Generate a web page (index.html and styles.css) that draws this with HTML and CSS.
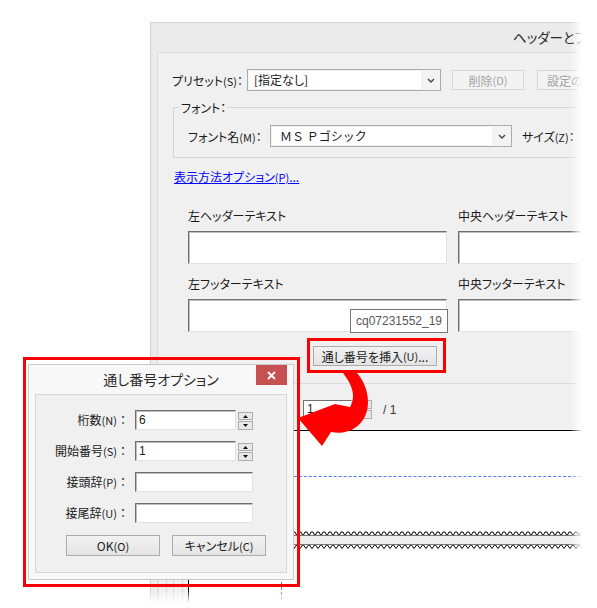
FILE: index.html
```html
<!DOCTYPE html>
<html lang="ja">
<head>
<meta charset="utf-8">
<title>通し番号オプション</title>
<link rel="stylesheet" href="styles.css">
</head>
<body>
<div class="main">
  <div class="titlebar">ヘッダーとフッター</div>
  <div class="client">
    <div class="preset-row">
      <span class="preset-lbl">プリセット<span class="acc">(S)</span>：</span>
      <div class="combo preset-combo">
        <span class="combo-text">[指定なし]</span>
        <span class="combo-arrow"><svg width="8" height="5" viewBox="0 0 8 5"><path d="M1 1 L4 4 L7 1" fill="none" stroke="#444" stroke-width="1.4"/></svg></span>
      </div>
      <div class="btn disabled del-btn">削除<span class="acc">(D)</span></div>
      <div class="btn disabled set-btn">設定の保存<span class="acc">(A)</span>...</div>
    </div>
    <div class="group">
      <span class="group-label">フォント：</span>
      <div class="font-row">
        <span class="font-lbl">フォント名<span class="acc">(M)</span>：</span>
        <div class="combo font-combo">
          <span class="combo-text font-name">ＭＳ Ｐゴシック</span>
          <span class="combo-arrow"><svg width="8" height="5" viewBox="0 0 8 5"><path d="M1 1 L4 4 L7 1" fill="none" stroke="#444" stroke-width="1.4"/></svg></span>
        </div>
        <span class="size-lbl">サイズ<span class="acc">(Z)</span>：</span>
      </div>
    </div>
    <a class="link">表示方法オプション<span class="acc">(P)</span>...</a>
    <div class="text-grid">
      <div class="field"><div class="field-lbl">左ヘッダーテキスト</div><div class="tbox"></div></div>
      <div class="field"><div class="field-lbl">中央ヘッダーテキスト</div><div class="tbox"></div></div>
      <div class="field"><div class="field-lbl">左フッターテキスト</div><div class="tbox"></div></div>
      <div class="field"><div class="field-lbl">中央フッターテキスト</div><div class="tbox"></div></div>
    </div>
    <div class="insert-row">
      <div class="hilite"><div class="btn insert-btn">通し番号を挿入<span class="acc">(U)</span>...</div></div>
    </div>
    <div class="tooltip">cq07231552_19</div>
    <div class="sep"></div>
    <div class="page-row">
      <div class="num-input">1</div>
      <div class="spin"><span></span><span></span></div>
      <span class="of">/ 1</span>
    </div>
    <div class="preview-row">
      <div class="ruler"></div>
      <div class="preview">
        <div class="hguide"></div>
        <svg class="zigzag" height="18">
          <defs>
            <pattern id="zz" width="6" height="18" patternUnits="userSpaceOnUse">
              <path d="M0.5 4 L2 1 L4 1 L5.5 4" fill="#fff" stroke="#000" stroke-width="1"/>
              <path d="M0.5 14 L3 17.5 L5.5 14" fill="#fff" stroke="#000" stroke-width="1"/>
            </pattern>
          </defs>
          <rect x="0" y="4" width="100%" height="10" fill="#efefef"/>
          <line x1="0" y1="4" x2="100%" y2="4" stroke="#000" stroke-width="1"/>
          <line x1="0" y1="14" x2="100%" y2="14" stroke="#000" stroke-width="1"/>
          <rect x="0" y="0" width="100%" height="18" fill="url(#zz)"/>
        </svg>
        <div class="vguide"></div>
      </div>
    </div>
  </div>
</div>

<div class="dlg-wrap">
  <div class="dialog">
    <div class="dlg-title">
      <span class="dlg-title-text">通し番号オプション</span>
      <span class="close"><svg width="9" height="9" viewBox="0 0 9 9"><path d="M1 1 L8 8 M8 1 L1 8" stroke="#fff" stroke-width="1.8"/></svg></span>
    </div>
    <div class="panel">
      <div class="opt-grid">
        <span class="opt-lbl">桁数<span class="acc">(N)</span>：</span>
        <div class="opt-field">
          <div class="opt-input">6</div>
          <div class="spin2">
            <span class="up"><svg width="5" height="3" viewBox="0 0 5 3"><path d="M0 3 L2.5 0 L5 3Z" fill="#111"/></svg></span>
            <span class="down"><svg width="5" height="3" viewBox="0 0 5 3"><path d="M0 0 L2.5 3 L5 0Z" fill="#111"/></svg></span>
          </div>
        </div>
        <span class="opt-lbl">開始番号<span class="acc">(S)</span>：</span>
        <div class="opt-field">
          <div class="opt-input">1</div>
          <div class="spin2">
            <span class="up"><svg width="5" height="3" viewBox="0 0 5 3"><path d="M0 3 L2.5 0 L5 3Z" fill="#111"/></svg></span>
            <span class="down"><svg width="5" height="3" viewBox="0 0 5 3"><path d="M0 0 L2.5 3 L5 0Z" fill="#111"/></svg></span>
          </div>
        </div>
        <span class="opt-lbl">接頭辞<span class="acc">(P)</span>：</span>
        <div class="opt-field"><div class="opt-input wide"></div></div>
        <span class="opt-lbl">接尾辞<span class="acc">(U)</span>：</span>
        <div class="opt-field"><div class="opt-input wide"></div></div>
      </div>
      <div class="opt-btns">
        <div class="btn dbtn">OK<span class="acc">(O)</span></div>
        <div class="btn dbtn">キャンセル<span class="acc">(C)</span></div>
      </div>
    </div>
  </div>
</div>

<svg class="arrow" width="90" height="90" viewBox="290 365 90 90">
  <path d="M343 373 C351 383 357 396 350 407 L335 404 L298 418 L322 446 L331 432 C350 436 368 424 368 402 C368 390 363 380 357 373 Z" fill="#f00"/>
</svg>

<div class="fade-r"></div>
<div class="fade-b"></div>
</body>
</html>
```

FILE: styles.css
```css
html, body {
  margin: 0;
  padding: 0;
  width: 597px;
  height: 608px;
  overflow: hidden;
  background: #fff;
}

body {
  position: relative;
  font-family: "Noto Sans CJK JP", "Noto Sans", sans-serif;
  font-size: 12px;
  font-feature-settings: "palt";
  color: #1a1a1a;
}

.acc {
  font-size: 11px;
}

/* ---------- main window ---------- */
.main {
  position: absolute;
  left: 150px;
  top: 22px;
  width: 480px;
  height: 600px;
  border-top: 1px solid #d2d2d2;
  border-left: 1px solid #d2d2d2;
  background: #ebebeb;
}

.titlebar {
  height: 29px;
  line-height: 29px;
  padding-left: 362px;
  font-size: 13.5px;
  color: #2b2b2b;
  white-space: nowrap;
}

.client {
  position: relative;
  margin-left: 6px;
  height: 570px;
  border-top: 1px solid #dcdcdc;
  border-left: 1px solid #dcdcdc;
  background: #f0f0f0;
}

.preset-row {
  display: flex;
  align-items: center;
  height: 22px;
  margin: 16px 0 0 14px;
  white-space: nowrap;
}

.preset-lbl {
  width: 75px;
  flex: none;
}

.combo {
  display: flex;
  flex: none;
  height: 22px;
  box-sizing: border-box;
  border: 1px solid #acacac;
  background: #f3f3f3;
}

.combo-text {
  flex: 1;
  margin: 1px 0 1px 1px;
  padding-left: 5px;
  line-height: 18px;
  background: #fff;
  white-space: nowrap;
}

.combo-arrow {
  width: 19px;
  display: flex;
  align-items: center;
  justify-content: center;
}

.preset-combo {
  width: 194px;
}

.btn {
  display: flex;
  flex: none;
  align-items: center;
  justify-content: center;
  box-sizing: border-box;
  height: 20px;
  border: 1px solid #acacac;
  background: linear-gradient(#f2f2f2, #e4e4e4);
  white-space: nowrap;
}

.btn.disabled {
  border-color: #d6d6d6;
  background: #f3f3f3;
  color: #a3a3a3;
}

.del-btn {
  width: 72px;
  margin-left: 11px;
}

.set-btn {
  width: 100px;
  margin-left: 13px;
  justify-content: flex-start;
  padding-left: 9px;
}

.group {
  position: relative;
  margin: 16px 0 0 15px;
  border: 1px solid #d5d5d5;
  border-right: none;
  padding: 17px 0 10px 14px;
}

.group-label {
  position: absolute;
  left: 6px;
  top: -9px;
  padding: 0 1px;
  line-height: 17px;
  background: #f0f0f0;
}

.font-row {
  display: flex;
  align-items: center;
  height: 22px;
  white-space: nowrap;
}

.font-lbl {
  width: 82px;
  flex: none;
}

.font-combo {
  width: 242px;
}

.font-combo .font-name {
  padding-left: 8px;
  font-feature-settings: normal;
}

.size-lbl {
  margin-left: 10px;
}

.link {
  display: block;
  width: max-content;
  margin: 10px 0 0 16px;
  line-height: 17px;
  color: #0000ff;
  text-decoration: underline;
}

.text-grid {
  display: grid;
  grid-template-columns: 259px 259px;
  column-gap: 11px;
  row-gap: 11px;
  margin: 21px 0 0 30px;
}

.field-lbl {
  line-height: 17px;
  white-space: nowrap;
}

.tbox {
  margin-top: 7px;
  height: 33px;
  box-sizing: border-box;
  background: #fff;
  border: 1px solid;
  border-color: #6f6f6f #e3e3e3 #e3e3e3 #6f6f6f;
  box-shadow: inset 1px 1px 0 #bdbdbd;
}

.insert-row {
  display: flex;
  margin: 6px 0 0 149px;
}

.hilite {
  border: 3px solid #f00;
  padding: 5px 6px 4px 3px;
}

.insert-btn {
  width: 124px;
}

.tooltip {
  position: absolute;
  left: 192px;
  top: 256px;
  width: 98px;
  height: 24px;
  box-sizing: border-box;
  border: 1px solid #767676;
  background: #fff;
  font-family: "Liberation Sans", sans-serif;
  font-size: 12px;
  color: #575757;
  display: flex;
  align-items: center;
  justify-content: center;
}

.sep {
  margin-top: 10px;
  border-top: 1px solid #dadada;
}

.page-row {
  display: flex;
  align-items: center;
  height: 19px;
  margin: 16px 0 0 145px;
}

.num-input {
  width: 49px;
  height: 19px;
  box-sizing: border-box;
  border: 1px solid;
  border-color: #707070 #dcdcdc #dcdcdc #707070;
  background: #fff;
  padding-left: 3px;
  font-family: "Liberation Sans", sans-serif;
  font-size: 12px;
  line-height: 17px;
}

.spin {
  width: 20px;
  height: 19px;
  display: flex;
  flex-direction: column;
  gap: 1px;
}

.spin span {
  flex: 1;
  border: 1px solid #adadad;
  background: #e6e6e6;
}

.of {
  margin-left: 11px;
  font-family: "Liberation Sans", sans-serif;
  color: #333;
}

.preview-row {
  display: flex;
  height: 200px;
  margin-top: 11px;
}

.ruler {
  width: 30px;
  flex: none;
  background: linear-gradient(to right,
    #d8d8d8 0 1px, transparent 1px 8px,
    #d8d8d8 8px 9px, transparent 9px 15px,
    #d8d8d8 15px 16px, transparent 16px 24px,
    #d8d8d8 24px 25px, transparent 25px) #f0f0f0;
}

.preview {
  position: relative;
  flex: 1;
  background: #fff;
  border-top: 1px solid #000;
  border-left: 1px solid #000;
}

.hguide {
  margin-top: 45px;
  border-top: 1px dashed #3f83e6;
}

.zigzag {
  display: block;
  width: 100%;
  margin-top: 54px;
}

.vguide {
  position: absolute;
  left: 92px;
  top: 0;
  bottom: 0;
  border-left: 1px dashed #3f83e6;
}

/* ---------- dialog ---------- */
.dlg-wrap {
  position: absolute;
  left: 23px;
  top: 357px;
  width: 277px;
  height: 230px;
  box-sizing: border-box;
  border: 3px solid #f00;
  padding: 4px 3px 4px 2px;
}

.dialog {
  width: 266px;
  height: 216px;
  box-sizing: border-box;
  border: 1px solid #cbcbcb;
  background: #f8f8f8;
  display: flex;
  flex-direction: column;
}

.dlg-title {
  display: grid;
  grid-template-columns: 37px 1fr 37px;
  height: 29px;
  flex: none;
}

.dlg-title-text {
  grid-column: 2;
  text-align: center;
  line-height: 29px;
  font-size: 14px;
  color: #2b2b2b;
  white-space: nowrap;
}

.close {
  grid-column: 3;
  justify-self: start;
  width: 31px;
  height: 20px;
  background: #c75050;
  display: flex;
  align-items: center;
  justify-content: center;
}

.panel {
  flex: 1;
  margin: 0 6px 6px;
  border: 1px solid #d6d6d6;
  background: #f0f0f0;
  padding-top: 15px;
}

.opt-grid {
  display: grid;
  grid-template-columns: 93px auto;
  column-gap: 6px;
  row-gap: 11px;
  align-items: center;
}

.opt-lbl {
  text-align: right;
  line-height: 20px;
  white-space: nowrap;
  font-feature-settings: normal;
}

.opt-field {
  display: flex;
  gap: 2px;
  height: 20px;
}

.opt-input {
  width: 101px;
  height: 20px;
  box-sizing: border-box;
  border: 1px solid;
  border-color: #6f6f6f #e3e3e3 #e3e3e3 #6f6f6f;
  box-shadow: inset 1px 1px 0 #bdbdbd;
  background: #fff;
  padding-left: 3px;
  font-family: "Liberation Sans", sans-serif;
  font-size: 12px;
  line-height: 18px;
}

.opt-input.wide {
  width: 118px;
}

.spin2 {
  width: 15px;
  display: flex;
  flex-direction: column;
  gap: 1px;
  padding-top: 2px;
}

.spin2 span {
  box-sizing: border-box;
  border: 1px solid #adadad;
  background: #e9e9e9;
  display: flex;
  align-items: center;
  justify-content: center;
}

.spin2 .up {
  height: 8px;
}

.spin2 .down {
  height: 9px;
}

.opt-btns {
  display: flex;
  gap: 12px;
  margin: 12px 0 0 30px;
}

.dbtn {
  width: 94px;
  height: 21px;
}

/* ---------- overlays ---------- */
.arrow {
  position: absolute;
  left: 290px;
  top: 365px;
}

.fade-r {
  position: absolute;
  top: 0;
  left: 570px;
  width: 27px;
  height: 608px;
  background: linear-gradient(to right, rgba(255,255,255,0), #fff 12px);
}

.fade-b {
  position: absolute;
  left: 0;
  top: 589px;
  width: 597px;
  height: 19px;
  background: linear-gradient(to bottom, rgba(255,255,255,0), #fff 14px);
}
```
